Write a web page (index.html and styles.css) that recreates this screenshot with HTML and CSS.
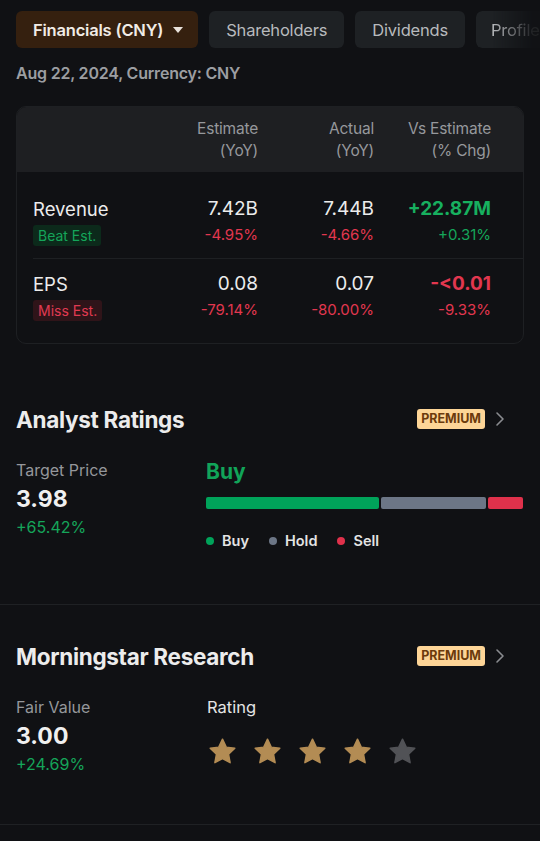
FILE: index.html
```html
<!DOCTYPE html>
<html>
<head>
<meta charset="utf-8">
<link rel="stylesheet" href="styles.css">
</head>
<body>
<div class="page">
  <div class="tabs">
    <div class="tab tab-active">Financials (CNY) <span class="caret"></span></div>
    <div class="tab">Shareholders</div>
    <div class="tab">Dividends</div>
    <div class="tab tab-fade">Profile</div>
  </div>
  <div class="date">Aug 22, 2024, Currency: CNY</div>

  <div class="card">
    <div class="thead">
      <div class="th-name"></div>
      <div class="th">Estimate<br>(YoY)</div>
      <div class="th">Actual<br>(YoY)</div>
      <div class="th">Vs Estimate<br>(% Chg)</div>
    </div>
    <div class="row">
      <div class="name-col">
        <div class="name">Revenue</div>
        <span class="badge beat">Beat Est.</span>
      </div>
      <div class="cell"><div class="val">7.42B</div><div class="pct red">-4.95%</div></div>
      <div class="cell"><div class="val">7.44B</div><div class="pct red">-4.66%</div></div>
      <div class="cell"><div class="val bold green">+22.87M</div><div class="pct green">+0.31%</div></div>
    </div>
    <div class="row row-last">
      <div class="name-col">
        <div class="name">EPS</div>
        <span class="badge miss">Miss Est.</span>
      </div>
      <div class="cell"><div class="val">0.08</div><div class="pct red">-79.14%</div></div>
      <div class="cell"><div class="val">0.07</div><div class="pct red">-80.00%</div></div>
      <div class="cell"><div class="val bold red">-&lt;0.01</div><div class="pct red">-9.33%</div></div>
    </div>
  </div>

  <section class="section first">
    <div class="sec-head">
      <h2>Analyst Ratings</h2>
      <div class="sec-right">
        <span class="premium">PREMIUM</span>
        <svg class="chev" width="10" height="16" viewBox="0 0 10 16"><path d="M2 2 L8 8 L2 14" fill="none" stroke="#8a8c90" stroke-width="1.6" stroke-linecap="round" stroke-linejoin="round"/></svg>
      </div>
    </div>
    <div class="sec-body">
      <div class="left">
        <div class="label">Target Price</div>
        <div class="big">3.98</div>
        <div class="chg green">+65.42%</div>
      </div>
      <div class="right">
        <div class="buy">Buy</div>
        <div class="bar">
          <div class="seg seg-buy"></div>
          <div class="seg seg-hold"></div>
          <div class="seg seg-sell"></div>
        </div>
        <div class="legend">
          <span class="lg"><i class="dot d-buy"></i>Buy</span>
          <span class="lg"><i class="dot d-hold"></i>Hold</span>
          <span class="lg"><i class="dot d-sell"></i>Sell</span>
        </div>
      </div>
    </div>
  </section>

  <section class="section second">
    <div class="sec-head">
      <h2>Morningstar Research</h2>
      <div class="sec-right">
        <span class="premium">PREMIUM</span>
        <svg class="chev" width="10" height="16" viewBox="0 0 10 16"><path d="M2 2 L8 8 L2 14" fill="none" stroke="#8a8c90" stroke-width="1.6" stroke-linecap="round" stroke-linejoin="round"/></svg>
      </div>
    </div>
    <div class="sec-body">
      <div class="left">
        <div class="label">Fair Value</div>
        <div class="big">3.00</div>
        <div class="chg green">+24.69%</div>
      </div>
      <div class="right">
        <div class="rating">Rating</div>
        <div class="stars">
          <svg class="star" viewBox="0 0 24 24"><path d="M12 1.8l3.1 6.6 7.1.9-5.2 4.9 1.3 7.1L12 17.8l-6.3 3.5 1.3-7.1L1.8 9.3l7.1-.9z" fill="#b38c54" stroke="#b38c54" stroke-width="1.2" stroke-linejoin="round"/></svg>
          <svg class="star" viewBox="0 0 24 24"><path d="M12 1.8l3.1 6.6 7.1.9-5.2 4.9 1.3 7.1L12 17.8l-6.3 3.5 1.3-7.1L1.8 9.3l7.1-.9z" fill="#b38c54" stroke="#b38c54" stroke-width="1.2" stroke-linejoin="round"/></svg>
          <svg class="star" viewBox="0 0 24 24"><path d="M12 1.8l3.1 6.6 7.1.9-5.2 4.9 1.3 7.1L12 17.8l-6.3 3.5 1.3-7.1L1.8 9.3l7.1-.9z" fill="#b38c54" stroke="#b38c54" stroke-width="1.2" stroke-linejoin="round"/></svg>
          <svg class="star" viewBox="0 0 24 24"><path d="M12 1.8l3.1 6.6 7.1.9-5.2 4.9 1.3 7.1L12 17.8l-6.3 3.5 1.3-7.1L1.8 9.3l7.1-.9z" fill="#b38c54" stroke="#b38c54" stroke-width="1.2" stroke-linejoin="round"/></svg>
          <svg class="star" viewBox="0 0 24 24"><path d="M12 1.8l3.1 6.6 7.1.9-5.2 4.9 1.3 7.1L12 17.8l-6.3 3.5 1.3-7.1L1.8 9.3l7.1-.9z" fill="#515256" stroke="#515256" stroke-width="1.2" stroke-linejoin="round"/></svg>
        </div>
      </div>
    </div>
  </section>
</div>
</body>
</html>
```
FILE: styles.css
```css
* { box-sizing: border-box; margin: 0; padding: 0; }
html, body { background: #101114; }
body {
  font-family: Inter, "Noto Sans", sans-serif;
  color: #e8e8e8;
  width: 540px;
  height: 841px;
  overflow: hidden;
}
.page { padding: 11px 0 0 16px; }

.tabs { display: flex; gap: 11px; white-space: nowrap; overflow: hidden; }
.tab {
  flex: none;
  height: 37px;
  padding: 0 17px;
  display: flex;
  align-items: center;
  background: #1e2124;
  color: #b8babd;
  border-radius: 6px;
  font-size: 16.5px;
  letter-spacing: -0.2px;
}
.tab-active { background: #35200f; color: #f1ece6; font-weight: 600; padding: 0 15px 0 17px; }
.caret {
  display: inline-block;
  width: 0; height: 0;
  border-left: 5.5px solid transparent;
  border-right: 5.5px solid transparent;
  border-top: 6px solid #e8e2dc;
  margin-left: 10px;
}
.tab-fade { padding-left: 15px; -webkit-mask-image: linear-gradient(to right, #000 20%, rgba(0,0,0,0.1) 70%); mask-image: linear-gradient(to right, #000 20%, rgba(0,0,0,0.1) 70%); }

.date {
  margin-top: 15px;
  font-size: 16px;
  font-weight: 600;
  color: #9c9ea2;
  letter-spacing: -0.2px;
}

.card {
  margin-top: 23px;
  width: 508px;
  border: 1px solid #1e2023;
  border-radius: 10px;
  overflow: hidden;
}
.thead {
  display: grid;
  grid-template-columns: 96px 129px 116px 117px;
  background: #1e1f22;
  padding: 11px 0 11px 16px;
  height: 65px;
}
.th {
  text-align: right;
  font-size: 15.5px;
  line-height: 22px;
  color: #96989c;
  letter-spacing: -0.2px;
}
.row {
  display: grid;
  grid-template-columns: 96px 129px 116px 117px;
  margin-left: 16px;
  padding: 25px 0 12px;
  border-bottom: 1px solid #1e2023;
}
.row-last { border-bottom: none; padding-top: 13px; padding-bottom: 22px; }
.name { font-size: 18.5px; line-height: 24px; color: #ececec; white-space: nowrap; }
.badge {
  display: inline-block;
  margin-top: 4px;
  padding: 0 5px;
  height: 21px;
  line-height: 21px;
  border-radius: 3px;
  font-size: 14px;
  white-space: nowrap;
}
.beat { background: #0c2a1b; color: #15a55a; }
.miss { background: #2f1419; color: #e03a52; }
.cell { text-align: right; }
.val { font-size: 19px; line-height: 24px; color: #ececec; }
.pct { font-size: 15px; line-height: 20px; margin-top: 4px; }
.bold { font-weight: 700; }
.red { color: #e2374f; }
.green { color: #15a55a; }
.val.green { color: #17b05f; }

.section { margin-left: -16px; padding-left: 16px; width: 540px; padding-right: 17px; border-bottom: 1px solid #1f2124; }
.section.first { padding-top: 60px; padding-bottom: 55px; }
.section.second { padding-top: 36px; padding-bottom: 50px; }
.sec-head { display: flex; justify-content: space-between; align-items: center; height: 30px; }
h2 { font-size: 22.5px; font-weight: 700; color: #ececec; letter-spacing: -0.3px; }
.sec-right { display: flex; align-items: center; gap: 10px; margin-right: 18px; }
.premium {
  background: #fdd597;
  color: #6b3a0c;
  font-size: 12.5px;
  font-weight: 700;
  height: 20px;
  line-height: 20px;
  padding: 0 4px;
  border-radius: 3px;
  letter-spacing: 0;
}
.chev { display: block; }

.sec-body { display: flex; margin-top: 26px; }
.left { width: 191px; }
.label { font-size: 16px; line-height: 20px; color: #95979b; }
.big { font-size: 23px; font-weight: 700; line-height: 30px; margin-top: 4px; color: #f0f0f0; }
.chg { font-size: 16px; line-height: 20px; margin-top: 3px; }
.right { flex: 1; }
.buy { font-size: 21px; font-weight: 700; color: #11a459; line-height: 24px; margin-top: 0; }
.bar { display: flex; gap: 2px; height: 12px; margin-top: 13px; }
.seg { border-radius: 2px; height: 12px; }
.seg-buy { width: 173px; background: #00a35a; }
.seg-hold { width: 105px; background: #6c7686; }
.seg-sell { width: 35px; background: #e0314b; }
.legend { display: flex; gap: 20px; margin-top: 23px; font-size: 14.5px; font-weight: 600; color: #e4e4e4; align-items: center; }
.lg { display: flex; align-items: center; }
.dot { display: inline-block; width: 8px; height: 8px; border-radius: 50%; margin-right: 8px; }
.d-buy { background: #00a35a; }
.d-hold { background: #6c7686; }
.d-sell { background: #e0314b; }
.rating { font-size: 16.5px; line-height: 20px; color: #e4e4e4; }
.stars { display: flex; gap: 16px; margin-top: 20px; margin-left: 1px; }
.star { width: 29px; height: 29px; display: block; }
```
